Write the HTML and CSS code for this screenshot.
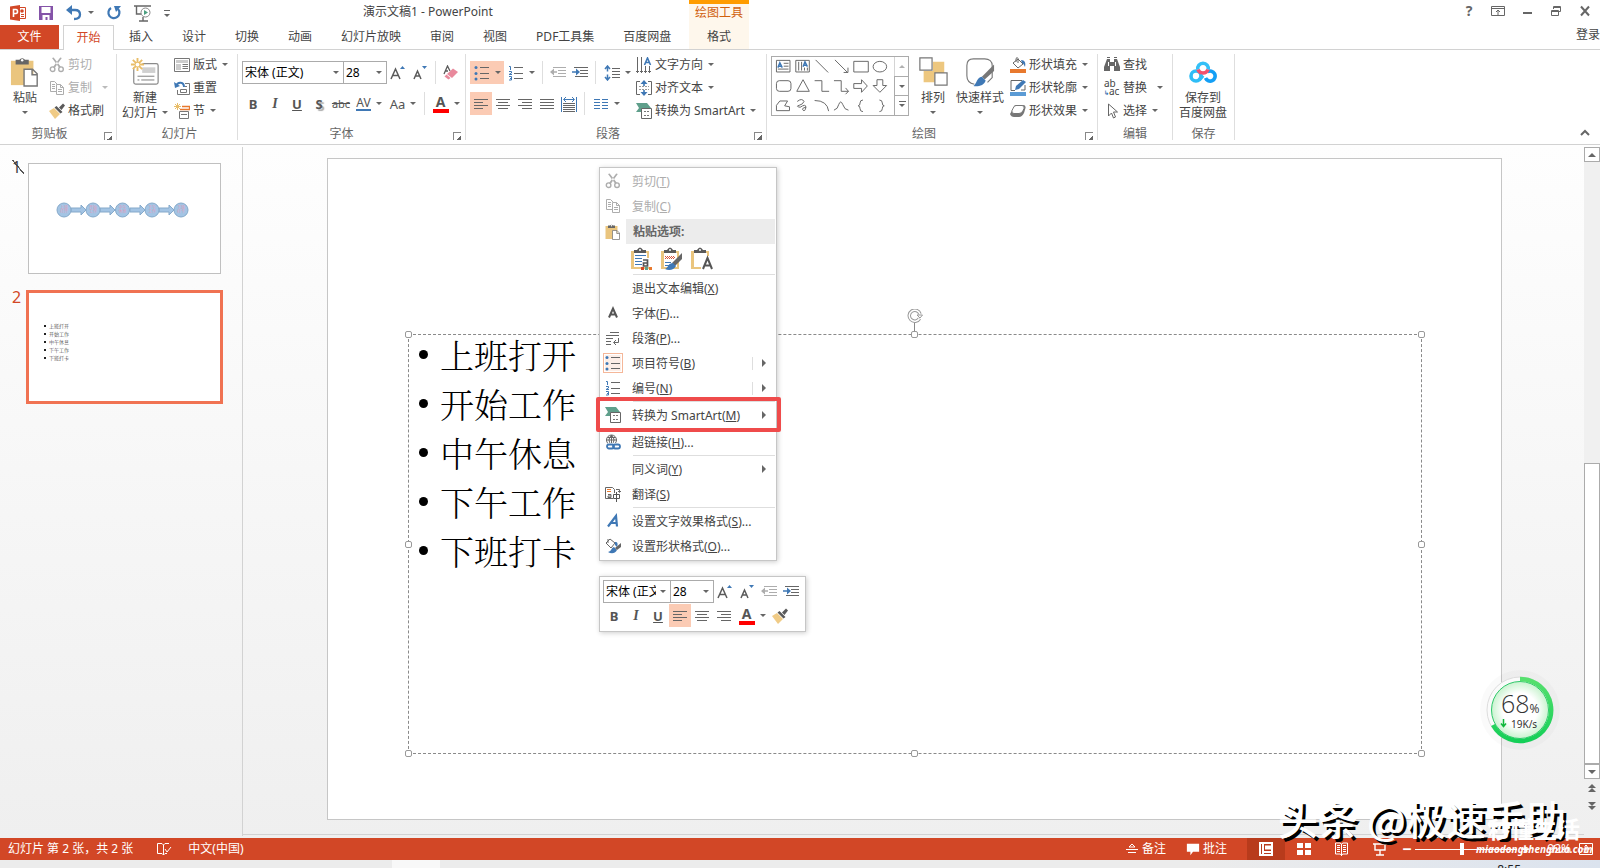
FILE: index.html
```html
<!DOCTYPE html>
<html lang="zh-CN">
<head>
<meta charset="utf-8">
<title>演示文稿1 - PowerPoint</title>
<link rel="stylesheet" href="styles.css">
</head>
<body>
<svg class="defs" aria-hidden="true">
  <symbol id="cut" viewBox="0 0 16 16"><g fill="none" stroke="currentColor" stroke-width="1.4"><circle cx="3.6" cy="12.2" r="2.3"/><circle cx="12" cy="12.2" r="2.3"/></g><path fill="currentColor" d="M3 1l1.600-.4L12 10l-2 .6zM12.800 1l-1.600-.4L4 10l2 .6z"/></symbol>
  <symbol id="copy" viewBox="0 0 16 16"><path fill="none" stroke="currentColor" d="M7 11.500H1.500v-10h4l2.500 2.500M3 4.500h3M3 6.500h3M3 8.500h3M7.500 4.500h4l3 3v7h-7zM11.500 4.500v3h3M9 9.500h4M9 11.500h4"/></symbol>
  <symbol id="brush" viewBox="0 0 16 16"><path fill="#f0cb86" d="M0 8l5-3 6 6-5 5z"/><path fill="#5a5a5a" d="M5.500 4.500l2-1.500 6 6-2 1.500zM10 4.500l4-4L16 2.500l-3.500 4.500z"/></symbol>
  <symbol id="paste" viewBox="0 0 32 32"><path fill="#eac57e" d="M1 4h24v26H1z"/><path fill="#666" d="M6 3h4a3.500 3.500 0 0 1 6 0h4v5H6z"/><circle cx="13" cy="3.500" r="1.300" fill="#fff"/><path fill="#fff" stroke="#777" stroke-width="1.500" d="M15 13h9l5 5v13H15zM23.500 13v6H29"/></symbol>
  <symbol id="newslide" viewBox="0 0 32 32"><rect x="4" y="7" width="26" height="22" rx="2" fill="#fff" stroke="#8a8a8a" stroke-width="1.300"/><path fill="#d0d0d0" d="M13 11h14v6H13z"/><path stroke="#777" d="M8 20.500h18M8 24.500h2M12 24.500h14"/><circle cx="8" cy="8" r="5.500" fill="#fff"/><path stroke="#e9bd68" stroke-width="2" d="M8 1v14M1 8h14M3 3l10 10M13 3L3 13"/><circle cx="8" cy="8" r="2" fill="#fff"/></symbol>
  <symbol id="layout" viewBox="0 0 16 16"><path fill="#fff" stroke="#777" d="M.5 1.500h15v13H.5z"/><path fill="#ccc" d="M2 3h12v3H2zM2 7h5v6H2z"/><path stroke="#777" d="M8.500 7.500H14M8.500 9.500H14M8.500 11.500H14"/></symbol>
  <symbol id="reset" viewBox="0 0 16 16"><path fill="none" stroke="#777" d="M11 3.500h4.500v11h-12V10"/><path fill="none" stroke="#777" d="M6.500 9.500h6v3h-6zM11 6.500h2"/><path fill="none" stroke="#3f78b5" stroke-width="2" d="M10 7c0-5-6-6-8-1"/><path fill="#3f78b5" d="M0 2l1 6 5-2z"/></symbol>
  <symbol id="section" viewBox="0 0 16 16"><path stroke="#e9bd68" d="M3.500 0v7M0 3.500h7M1 1l5 5M6 1L1 6"/><path fill="none" stroke="#e8792e" stroke-width="1.300" d="M8 3.500h7.500v3H6"/><path fill="none" stroke="#777" d="M5.500 8.500h9v7h-9zM7 11.500h6"/></symbol>
  <symbol id="growA" viewBox="0 0 16 16"><path fill="none" stroke="#5a5a5a" stroke-width="1.500" d="M1 14L5.500 4 10 14M3 10.500h5"/><path fill="#3f78b5" d="M10 4l2.500-3L15 4z"/></symbol>
  <symbol id="shrinkA" viewBox="0 0 16 16"><path fill="none" stroke="#5a5a5a" stroke-width="1.500" d="M2 14l3.500-8L9 14M3 11h5"/><path fill="#3f78b5" d="M10 1l2.500 3L15 1z"/></symbol>
  <symbol id="eraser" viewBox="0 0 16 16"><path fill="none" stroke="#5a5a5a" stroke-width="1.300" d="M1 9l3.500-8L7 6M2.500 6H5"/><path fill="#e9899c" d="M10 3.500l5 3.500-6 6-5-4z"/><path fill="#e9899c" d="M3.500 9.500l4 3.500-2 1.500-4-3z"/></symbol>
  <symbol id="bullets" viewBox="0 0 16 16"><g fill="#3f78b5"><circle cx="2" cy="2.500" r="1.500"/><circle cx="2" cy="8.500" r="1.500"/><circle cx="2" cy="14" r="1.500"/></g><path stroke="#666" d="M6 2.500h9M6 8.500h9M6 13.500h9"/></symbol>
  <symbol id="numbers" viewBox="0 0 16 16"><path fill="none" stroke="#3f78b5" d="M1 1.500h1.500V5M1 6.500h2.500V8L1 9.500h3M1 11.500h2.500v3.500H1M2 13.500h1"/><path stroke="#666" d="M6 2.500h9M6 8.500h9M6 13.500h9"/></symbol>
  <symbol id="outdent" viewBox="0 0 16 16"><path stroke="currentColor" d="M3 2.500h13M8 5.500h8M8 8.500h8M3 11.500h13"/><path fill="currentColor" d="M0 7l4-3.500v2.700h3v1.600H4v2.700z"/></symbol>
  <symbol id="indent" viewBox="0 0 16 16"><path stroke="#666" d="M2 2.500h14M8 5.500h8M8 8.500h8M3 11.500h13"/><path fill="#3f78b5" d="M8 7L4 3.500v2.700H0v1.600h4v2.700z"/></symbol>
  <symbol id="spacing" viewBox="0 0 16 16"><path stroke="#666" d="M8 3.500h8M8 6.500h8M8 9.500h8M8 12.500h8"/><path fill="none" stroke="#3f78b5" stroke-width="1.500" d="M3.500 1v5.500M3.500 9.500V15M1 4l2.500-3L6 4M1 12l2.500 3L6 12"/></symbol>
  <symbol id="left" viewBox="0 0 16 16"><path stroke="#666" d="M1 3.500h14M1 6.500h9M1 9.500h14M1 12.500h9"/></symbol>
  <symbol id="center" viewBox="0 0 16 16"><path stroke="#666" d="M1 3.500h14M3 6.500h10M1 9.500h14M3 12.500h10"/></symbol>
  <symbol id="right" viewBox="0 0 16 16"><path stroke="#666" d="M1 3.500h14M5 6.500h10M1 9.500h14M5 12.500h10"/></symbol>
  <symbol id="justify" viewBox="0 0 16 16"><path stroke="#666" d="M1 3.500h14M1 6.500h14M1 9.500h14M1 12.500h14"/></symbol>
  <symbol id="distribute" viewBox="0 0 16 16"><path fill="none" stroke="#3f78b5" d="M.5 1v15M15.500 1v15M3 3.500h10M5 1L2.500 3.500 5 6M11 1l2.500 2.500L11 6"/><path stroke="#666" d="M2 7.500h12M2 9.500h12M2 11.500h12M2 13.500h12M2 15.500h12"/></symbol>
  <symbol id="columns" viewBox="0 0 16 16"><path stroke="#3f78b5" d="M1 3.500h6M1 6.500h6M1 9.500h6M1 12.500h6M9 3.500h6M9 6.500h6M9 9.500h6M9 12.500h6"/></symbol>
  <symbol id="textdir" viewBox="0 0 16 16"><path fill="none" stroke="#666" d="M1.500 0v16M5.500 0v16M9.500 9v7M13.500 9v7M0 14l1.500 1.500L3 14M4 14l1.500 1.500L7 14M8 14l1.500 1.500L11 14M12 14l1.500 1.500L15 14"/><path fill="none" stroke="#3f78b5" stroke-width="1.600" d="M8.500 8l3-7 3 7M9.500 5.500h4"/></symbol>
  <symbol id="aligntext" viewBox="0 0 16 16"><path fill="none" stroke="#666" d="M4 1.500H.5v13H4M12 1.500h3.500v13H12"/><path stroke="#999" stroke-dasharray="2 1" d="M3 6.500h10M3 9.500h10"/><path fill="#3f78b5" d="M4.500 4L8 0l3.500 4H8.800v2H7.200V4zM4.500 12L8 16l3.500-4H8.800v-2H7.200v2z"/></symbol>
  <symbol id="smartart" viewBox="0 0 16 16"><path fill="#5f9f8b" d="M0 0h11l4 5H6v4H0l3-4z"/><path fill="#fff" stroke="#666" d="M5.500 5.500h10v10h-10z"/><path stroke="#777" stroke-dasharray="2 1" d="M8 8.500h6M8 12.500h6"/></symbol>
  <symbol id="arrange" viewBox="0 0 32 32"><path fill="#edc77f" d="M16 5h12v12H16zM6 15h12v12H6z"/><path fill="#fff" stroke="#777" stroke-width="1.300" d="M2 1h13v13H2zM18 17h13v13H18z"/></symbol>
  <symbol id="quickstyle" viewBox="0 0 32 32"><path fill="none" stroke="#777" stroke-width="1.200" d="M10 29C4 28 2 24 2 20V9c0-5 3-7 7-7h12c5 0 8 3 8 7v13l-5 5"/><path fill="#777" d="M31 8v7L21 24l-3-3z"/><path fill="#3f78b5" d="M9 31c4-3 3-9 9-10l4 4c-1 5-8 7-13 6z"/></symbol>
  <symbol id="fill" viewBox="0 0 16 16"><path fill="#e8792e" d="M0 12h16v4H0z"/><path fill="#fff" stroke="#666" d="M3 6l5-4 5 5-5 4zM6 5V1.500q1.500-2 2 0V6"/><path fill="#3f78b5" d="M11 3c4 0 5 3 4 7-1-2-1-3-3-4z"/></symbol>
  <symbol id="outline" viewBox="0 0 16 16"><path fill="#5b9bd5" d="M0 12h16v4H0z"/><path fill="none" stroke="#666" d="M12 .5H1v10h4M15 5v5h-4"/><path fill="#3f78b5" d="M5 10l1-4 7-6 3 2-7 7z"/></symbol>
  <symbol id="effects" viewBox="0 0 16 16"><path fill="#777" d="M5 2h8q3 0 2.500 3l-1.500 5q-2 4-5 4H4q-3 0-4-3z"/><path fill="#fff" stroke="#777" d="M6 2.500h6q3 0 2 3l-1 2q-1 3-4 3H4q-3 0-2-3l1-2q1-3 3-3z"/></symbol>
  <symbol id="find" viewBox="0 0 16 16"><path fill="#666" d="M3 2h3v3h4V2h3l3 8v4h-6v-5H6v5H0v-4zM3 0h3v1H3zM10 0h3v1h-3z"/><path stroke="#fff" d="M4.500 5v4M11.500 5v4"/></symbol>
  <symbol id="select" viewBox="0 0 16 16"><path fill="#fff" stroke="#666" d="M4.500 1v12l3-3 2 5 2-1-2-5h4z"/></symbol>
  <symbol id="cloud" viewBox="0 0 28 22"><g fill="none" stroke-width="3.600"><circle cx="7" cy="15" r="5" stroke="#2fbdf6"/><path stroke="#149ff5" d="M18.500 10.800A5 5 0 1 1 16.500 17"/><path stroke="#35c0f7" d="M8.800 8.500a5.300 5.300 0 1 1 10.400 0"/><path stroke="#f4516c" d="M9 8.500a5.300 5.300 0 0 0 10 0"/><path stroke="#2fbdf6" d="M10 19l4-4.500"/></g></symbol>
  <symbol id="link" viewBox="0 0 16 16"><g fill="none" stroke="#666"><circle cx="6.500" cy="6" r="5"/><path d="M1.500 6h10M6.500 1v10M2.500 3.500h8M6.500 1q-5 5 0 10M6.500 1q5 5 0 10"/></g><path fill="#fff" d="M3 9h13v7H3z"/><g fill="none" stroke="#3f78b5" stroke-width="1.800"><rect x="2" y="10.500" width="7" height="4" rx="2"/><rect x="8" y="10.500" width="7" height="4" rx="2"/></g></symbol>
  <symbol id="translate" viewBox="0 0 16 16"><path fill="#fff" stroke="#666" d="M.5 1.500h7l2 2v9h-9z"/><path stroke="#e8792e" d="M2 3.500h4M2 5.500h4"/><path fill="none" stroke="#666" d="M3 8.500h3v3H3v-1.500h3M11 3.500h3.500V6M13 5l1.500 1.500L16 5"/><path fill="#fff" d="M8 7h8v8H8z"/><path fill="none" stroke="#555" d="M8.500 8.500h6v4h-6zM11.500 6v10"/></symbol>
  <symbol id="bluea" viewBox="0 0 16 16"><path fill="none" stroke="#3f78b5" stroke-width="2.200" d="M3 13.500L11 3l1 10.500M6 10h6"/></symbol>
  <symbol id="boldA" viewBox="0 0 16 16"><path fill="none" stroke="#555" stroke-width="2" d="M4 12.500L8 3.500l4 9M5.500 9.500h5"/></symbol>
  <symbol id="para" viewBox="0 0 16 16"><path fill="none" stroke="#666" d="M5 2.500h9M1 5.500h13M1 8.500h7M1 11.500h5M1 14.500h5M13.500 8v4.500H9M11 10l-2.500 2.500L11 15"/></symbol>
  <symbol id="shapefmt" viewBox="0 0 16 16"><path fill="#fff" stroke="#666" d="M1 5l4-4 5 4-4 5zM3 1v4"/><path fill="#3f78b5" d="M10 4c3 0 3 2 2 5l-2-2zM3 14c4-1 3-4 6-5l3 3c-2 4-6 4-9 2z"/><path fill="#666" d="M16 5v4l-4 3-2-2z"/></symbol>
  <symbol id="clip" viewBox="0 0 22 24"><path fill="#eac57e" d="M0 4h18v18H0z"/><path fill="#fff" d="M3 6h13v14H3z"/><path fill="#5a5a5a" d="M3 3h3q3-5 6 0h3v3H3z"/><circle cx="9" cy="3" r="1" fill="#fff"/></symbol>
  <symbol id="bubble" viewBox="0 0 16 16"><path fill="currentColor" d="M1 2h14v9H8l-3 4v-4H1z"/></symbol>
</svg>

<header class="header">
  <div class="titlebar">
    <div class="qat">
      <svg class="i16" viewBox="0 0 16 16" role="img" aria-label="PowerPoint"><path fill="#d24726" d="M0 1.500L10 0v16L0 14.500z"/><path fill="none" stroke="#d24726" d="M10 2.500h5.500v11H10M11 9.500h3M11 11.500h3"/><circle cx="12" cy="6" r="1.800" fill="#d24726"/><path fill="none" stroke="#fff" stroke-width="1.600" d="M3.500 12V4.500H6q1.500 0 1.500 2T6 8.500H4"/></svg>
      <button aria-label="保存"><svg class="i16" viewBox="0 0 16 16"><path fill="#8453a8" d="M1 1h14v14H1z"/><path fill="#fff" d="M3.500 2h9v6h-9zM4.500 10h7v5h-2v-3h-2v3h-3z"/></svg></button>
      <button class="dd undo" aria-label="撤消"><svg class="i16" viewBox="0 0 16 16"><path fill="none" stroke="#3f78b5" stroke-width="2.300" d="M3 5h6q5 0 5 4.500T8 14"/><path fill="#3f78b5" d="M0 5l6-5v10z"/></svg></button>
      <button aria-label="重复"><svg class="i16" viewBox="0 0 16 16"><path fill="none" stroke="#3f78b5" stroke-width="2.200" d="M5 3a5.500 5.500 0 1 0 7 1"/><path fill="#3f78b5" d="M8 1h7l-5 6z"/></svg></button>
      <button class="wide" aria-label="从头开始"><svg class="i18" viewBox="0 0 18 18"><path fill="none" stroke="#666" stroke-width="1.400" d="M0 2h17M2.500 2v8H7M9 13v4M5 17h9"/><circle cx="11.500" cy="8.500" r="4.500" fill="#fff" stroke="#888"/><path fill="#4c9f80" d="M10 6l4 2.500-4 2.500z"/></svg></button>
      <button class="custom" aria-label="自定义快速访问工具栏"></button>
    </div>
    <h1 class="title">演示文稿1 - PowerPoint</h1>
    <div class="ctx">绘图工具</div>
    <div class="winbtns">
      <button class="help" aria-label="帮助">?</button>
      <button aria-label="功能区显示选项"><svg class="i14" viewBox="0 0 14 14"><path fill="none" stroke="#666" d="M.5 2.500h13v9H.5zM1 4.500h12M7 11V6M5 8l2-2 2 2"/></svg></button>
      <button aria-label="最小化"><svg class="i14" viewBox="0 0 14 14"><path fill="#666" d="M3 8h9v2H3z"/></svg></button>
      <button aria-label="向下还原"><svg class="i14" viewBox="0 0 14 14"><path fill="none" stroke="#666" d="M2.500 6.500h7v5h-7zM2 7.500h8M4.500 5V2.500h7v5H10M4 3.500h8"/></svg></button>
      <button aria-label="关闭"><svg class="i14" viewBox="0 0 14 14"><path stroke="#666" stroke-width="2" d="M3 2.500l8 9M11 2.500l-8 9"/></svg></button>
    </div>
  </div>
  <nav class="tabs">
    <button class="file">文件</button>
    <button class="active">开始</button>
    <button>插入</button><button>设计</button><button>切换</button><button>动画</button><button>幻灯片放映</button><button>审阅</button><button>视图</button><button>PDF工具集</button><button>百度网盘</button>
    <button class="fmt">格式</button>
    <a class="login" href="#">登录</a>
  </nav>
</header>

<section class="ribbon" aria-label="功能区">
  <div class="group g-clip">
    <div class="body">
      <button class="big"><svg class="i32"><use href="#paste"/></svg><span>粘贴</span><i class="caret"></i></button>
      <div class="stack">
        <button class="row off"><svg class="i16"><use href="#cut"/></svg>剪切</button>
        <button class="row off dd far"><svg class="i16"><use href="#copy"/></svg>复制</button>
        <button class="row"><svg class="i16"><use href="#brush"/></svg>格式刷</button>
      </div>
    </div>
    <div class="label launch">剪贴板</div>
  </div>
  <div class="group g-slides">
    <div class="body">
      <button class="big"><svg class="i32"><use href="#newslide"/></svg><span>新建</span><span class="dd">幻灯片</span></button>
      <div class="stack">
        <button class="row dd"><svg class="i16"><use href="#layout"/></svg>版式</button>
        <button class="row"><svg class="i16"><use href="#reset"/></svg>重置</button>
        <button class="row dd"><svg class="i16"><use href="#section"/></svg>节</button>
      </div>
    </div>
    <div class="label">幻灯片</div>
  </div>
  <div class="group g-font">
    <div class="body lines">
      <div class="line">
        <div class="combo name"><select aria-label="字体"><option>宋体 (正文)</option></select></div>
        <div class="combo size"><select aria-label="字号"><option>28</option></select></div>
        <button class="tool" aria-label="增大字号"><svg class="i16"><use href="#growA"/></svg></button>
        <button class="tool" aria-label="减小字号"><svg class="i16"><use href="#shrinkA"/></svg></button>
        <i class="sep"></i>
        <button class="tool" aria-label="清除格式"><svg class="i16"><use href="#eraser"/></svg></button>
      </div>
      <div class="line">
        <button class="tool b">B</button><button class="tool it">I</button><button class="tool u">U</button><button class="tool sh">S</button><button class="tool st">abc</button>
        <button class="tool dd w34 av"><span>AV</span></button><button class="tool dd w34 aa">Aa</button>
        <i class="sep"></i>
        <button class="tool dd w34 fc"><span>A</span></button>
      </div>
    </div>
    <div class="label launch">字体</div>
  </div>
  <div class="group g-para">
    <div class="body">
      <div class="lines">
        <div class="line">
          <button class="tool dd w34 on" aria-label="项目符号"><svg class="i16"><use href="#bullets"/></svg></button>
          <button class="tool dd w34" aria-label="编号"><svg class="i16"><use href="#numbers"/></svg></button>
          <i class="sep"></i>
          <button class="tool off" aria-label="降低列表级别"><svg class="i16"><use href="#outdent"/></svg></button>
          <button class="tool" aria-label="提高列表级别"><svg class="i16"><use href="#indent"/></svg></button>
          <i class="sep"></i>
          <button class="tool dd w34" aria-label="行距"><svg class="i16"><use href="#spacing"/></svg></button>
        </div>
        <div class="line">
          <button class="tool on" aria-label="左对齐"><svg class="i16"><use href="#left"/></svg></button>
          <button class="tool" aria-label="居中"><svg class="i16"><use href="#center"/></svg></button>
          <button class="tool" aria-label="右对齐"><svg class="i16"><use href="#right"/></svg></button>
          <button class="tool" aria-label="两端对齐"><svg class="i16"><use href="#justify"/></svg></button>
          <button class="tool" aria-label="分散对齐"><svg class="i16"><use href="#distribute"/></svg></button>
          <i class="sep"></i>
          <button class="tool dd w34" aria-label="分栏"><svg class="i16"><use href="#columns"/></svg></button>
        </div>
      </div>
      <div class="stack">
        <button class="row dd"><svg class="i16"><use href="#textdir"/></svg>文字方向</button>
        <button class="row dd"><svg class="i16"><use href="#aligntext"/></svg>对齐文本</button>
        <button class="row dd"><svg class="i16"><use href="#smartart"/></svg>转换为 SmartArt</button>
      </div>
    </div>
    <div class="label launch">段落</div>
  </div>
  <div class="group g-draw">
    <div class="body">
      <div class="gallery">
        <svg class="shapes" viewBox="1 0 122 60" role="img" aria-label="形状">
          <g fill="none" stroke="#666">
            <path d="M3.500 3.500h14v12h-14zM11 6.500h5M11 9.500h5M5 12.500h11M23.500 3.500h14v12h-14zM26.500 5v9M29.500 5v9M32.500 11v3M35.500 11v3"/>
            <path d="M44 3l13 13M64 3l13 13M77.500 11v5H73M83.500 4.500h15v11h-15z"/><ellipse cx="110.500" cy="10" rx="7" ry="5.500"/>
            <rect x="3.500" y="24.500" width="15" height="11" rx="3"/><path d="M31 23.500l6.500 12h-13zM43 24.500h7.500v11H58M63 24.500h7.500v11H78M75 32l3 3.500-3 3M83.500 27.500h8v-4l6 6.500-6 6.500v-4h-8zM107.500 23.500h6v6h4l-7 7-7-7h4z"/>
            <path d="M7 45.500h8l-3 5 5 1v4H3.500V50zM25 46q5-4 7 0-1 3-5 4t1 2q6-4 6 0-1 5-3 3-2-2 3-3M43 45q13 0 14.500 11M63 55q4-1 5-6 2-5 4 0 2 6 6 6M93 44.500q-3 0-3 3t-2 3q2 0 2 3t3 3M110 44.500q3 0 3 3t2 3q-2 0-2 3t-3 3"/>
          </g>
          <path fill="none" stroke="#3f78b5" stroke-width="1.500" d="M5 11l2-5 2.500 5M6 9.500h3M31 10l2-5 2.500 5M32 8.500h3"/>
        </svg>
        <div class="gscroll"><button class="dim" aria-label="上一行"><i class="caret up"></i></button><button aria-label="下一行"><i class="caret"></i></button><button aria-label="其他"><i class="caret bar"></i></button></div>
      </div>
      <button class="big arr"><svg class="i32"><use href="#arrange"/></svg><span>排列</span><i class="caret"></i></button>
      <button class="big qs"><svg class="i32"><use href="#quickstyle"/></svg><span>快速样式</span><i class="caret"></i></button>
      <div class="stack">
        <button class="row dd"><svg class="i16"><use href="#fill"/></svg>形状填充</button>
        <button class="row dd"><svg class="i16"><use href="#outline"/></svg>形状轮廓</button>
        <button class="row dd"><svg class="i16"><use href="#effects"/></svg>形状效果</button>
      </div>
    </div>
    <div class="label launch">绘图</div>
  </div>
  <div class="group g-edit">
    <div class="body">
      <div class="stack">
        <button class="row"><svg class="i16"><use href="#find"/></svg>查找</button>
        <button class="row dd far"><span class="abac">ab<br><b>↳</b>ac</span>替换</button>
        <button class="row dd"><svg class="i16"><use href="#select"/></svg>选择</button>
      </div>
    </div>
    <div class="label">编辑</div>
  </div>
  <div class="group g-save">
    <div class="body">
      <button class="big"><svg class="i32"><use href="#cloud" x="1" y="4" width="28" height="22"/></svg><span>保存到</span><span>百度网盘</span></button>
    </div>
    <div class="label">保存</div>
  </div>
  <button class="collapse" aria-label="折叠功能区"><svg class="i14" viewBox="0 0 14 14"><path fill="none" stroke="#666" stroke-width="2" d="M3 9l4-4 4 4"/></svg></button>
</section>

<main class="work">
  <aside class="thumbs">
    <div class="thumb"><span class="num hid">1</span>
      <div class="mini">
        <svg viewBox="0 0 191 109" role="img" aria-label="流程图"><g fill="#a3c4e4" stroke="#85a9ca"><path d="M42 44h10v-3l5 5-5 5v-3H42zM71 44h10v-3l5 5-5 5v-3H71zM101 44h10v-3l5 5-5 5v-3h-10zM130 44h10v-3l5 5-5 5v-3h-10z"/><circle cx="35" cy="46" r="7"/><circle cx="64" cy="46" r="7"/><circle cx="93.500" cy="46" r="7"/><circle cx="123" cy="46" r="7"/><circle cx="152" cy="46" r="7"/></g>
        <g class="nodes"><text x="35" y="45">上班</text><text x="35" y="49">打开</text><text x="64" y="45">开始</text><text x="64" y="49">工作</text><text x="93.500" y="45">中午</text><text x="93.500" y="49">休息</text><text x="123" y="45">下午</text><text x="123" y="49">工作</text><text x="152" y="45">下班</text><text x="152" y="49">打卡</text></g></svg>
      </div>
    </div>
    <div class="thumb cur"><span class="num">2</span>
      <div class="mini"><ul><li>上班打开</li><li>开始工作</li><li>中午休息</li><li>下午工作</li><li>下班打卡</li></ul></div>
    </div>
  </aside>
  <div class="stage">
    <div class="slide">
      <div class="textbox">
        <ul><li>上班打开</li><li>开始工作</li><li>中午休息</li><li>下午工作</li><li>下班打卡</li></ul>
        <i class="h tl"></i><i class="h tc"></i><i class="h tr"></i><i class="h ml"></i><i class="h mr"></i><i class="h bl"></i><i class="h bc"></i><i class="h br"></i>
        <svg class="rot" viewBox="0 0 16 22"><path fill="none" stroke="#999" stroke-width="3.500" d="M12.500 9.500A5.500 5.500 0 1 1 13 5"/><path fill="none" stroke="#fff" stroke-width="1.500" d="M12.500 9.500A5.500 5.500 0 1 1 13 5"/><path fill="#fff" stroke="#999" d="M10 6h5.500L13 9z"/><path stroke="#888" d="M7.500 14v8"/></svg>
      </div>
    </div>

    <div class="menu" role="menu">
      <button class="off"><svg class="i16"><use href="#cut"/></svg>剪切(<u>T</u>)</button>
      <button class="off"><svg class="i16"><use href="#copy"/></svg>复制(<u>C</u>)</button>
      <div class="head"><svg class="i16" viewBox="0 0 32 32"><use href="#paste"/></svg><span>粘贴选项:</span></div>
      <div class="pastes">
        <button aria-label="使用目标主题"><svg viewBox="0 0 22 24"><use href="#clip"/><path stroke="#3f78b5" d="M4 8.500h11M4 11.500h7M4 14.500h7M4 17.500h7"/><path fill="#fff" d="M11 11h11v9H11z"/><path fill="none" stroke="#555" stroke-width="1.700" d="M12 13h4.500v6H12.500v-3h4"/><path fill="#d24726" d="M10 20h3v3h-3z"/><path fill="#5f9f8b" d="M14 20h3v3h-3z"/><path fill="#e8792e" d="M18 20h3v3h-3z"/></svg></button>
        <button aria-label="保留源格式"><svg viewBox="0 0 22 24"><use href="#clip"/><path stroke="#d9543a" stroke-dasharray="1 1" d="M4 9.500h10M5 10.500h9M4 11.500h10"/><path stroke="#3f78b5" d="M4 15.500h6M4 18.500h4"/><path fill="#666" d="M21 6v6l-7 7-3-3z"/><path fill="#3f78b5" d="M4 22c4-2 3-6 8-6l3 3c-2 4-7 5-11 3z"/></svg></button>
        <button aria-label="只保留文本"><svg viewBox="0 0 22 24"><use href="#clip"/><path fill="#fff" d="M10 9h12v15H10z"/><path fill="none" stroke="#555" stroke-width="2" d="M12 22l4.500-11L21 22M13.500 18.500h6"/></svg></button>
      </div>
      <hr>
      <button>退出文本编辑(<u>X</u>)</button>
      <button><svg class="i16"><use href="#boldA"/></svg>字体(<u>F</u>)...</button>
      <button><svg class="i16"><use href="#para"/></svg>段落(<u>P</u>)...</button>
      <button class="sub split sel"><svg class="i16"><use href="#bullets"/></svg>项目符号(<u>B</u>)</button>
      <button class="sub split"><svg class="i16"><use href="#numbers"/></svg>编号(<u>N</u>)</button>
      <hr>
      <button class="sub"><svg class="i16"><use href="#smartart"/></svg>转换为 SmartArt(<u>M</u>)</button>
      <hr>
      <button><svg class="i16"><use href="#link"/></svg>超链接(<u>H</u>)...</button>
      <hr>
      <button class="sub">同义词(<u>Y</u>)</button>
      <button><svg class="i16"><use href="#translate"/></svg>翻译(<u>S</u>)</button>
      <hr>
      <button><svg class="i16"><use href="#bluea"/></svg>设置文字效果格式(<u>S</u>)...</button>
      <button><svg class="i16"><use href="#shapefmt"/></svg>设置形状格式(<u>O</u>)...</button>
      <div class="mark"></div>
    </div>

    <div class="minibar">
      <div class="line">
        <div class="combo mname"><select aria-label="字体"><option>宋体 (正文)</option></select></div>
        <div class="combo size"><select aria-label="字号"><option>28</option></select></div>
        <button class="tool" aria-label="增大字号"><svg class="i16"><use href="#growA"/></svg></button>
        <button class="tool" aria-label="减小字号"><svg class="i16"><use href="#shrinkA"/></svg></button>
        <button class="tool off" aria-label="降低列表级别"><svg class="i16"><use href="#outdent"/></svg></button>
        <button class="tool" aria-label="提高列表级别"><svg class="i16"><use href="#indent"/></svg></button>
      </div>
      <div class="line">
        <button class="tool b">B</button><button class="tool it">I</button><button class="tool u">U</button>
        <button class="tool on" aria-label="左对齐"><svg class="i16"><use href="#left"/></svg></button>
        <button class="tool" aria-label="居中"><svg class="i16"><use href="#center"/></svg></button>
        <button class="tool" aria-label="右对齐"><svg class="i16"><use href="#right"/></svg></button>
        <button class="tool dd w34 fc"><span>A</span></button>
        <button class="tool" aria-label="格式刷"><svg class="i16"><use href="#brush"/></svg></button>
      </div>
    </div>
  </div>
  <div class="scroll">
    <button class="box" aria-label="向上滚动"><i class="caret up"></i></button>
    <div class="track"><div class="grip"></div></div>
    <button class="box" aria-label="向下滚动"><i class="caret"></i></button>
    <button class="dbl" aria-label="上一张幻灯片"><i class="caret up"></i><i class="caret up"></i></button>
    <button class="dbl" aria-label="下一张幻灯片"><i class="caret"></i><i class="caret"></i></button>
  </div>
</main>

<footer class="status">
  <span class="count">幻灯片 第 2 张，共 2 张</span>
  <svg class="i16" viewBox="0 0 16 16"><path fill="none" stroke="#fff" d="M7.500 4v10M7.500 4L6 2.500H1.500v10H6L7.500 14M7.500 4L9 2.500h4M7.500 14L9 12.500h2M9 8l2 3 4-5"/></svg>
  <span class="lang">中文(中国)</span>
  <div class="tools">
    <button class="note"><svg class="i14" viewBox="0 0 14 14"><path fill="none" stroke="#fff" d="M1 7.500h12M3 10.500h8M4 5l3-3 3 3z"/></svg>备注</button>
    <button class="comment"><svg class="i14"><use href="#bubble"/></svg>批注</button>
    <button class="view now" aria-label="普通视图"><svg class="i16" viewBox="0 0 16 16"><path fill="none" stroke="#fff" stroke-width="2" d="M2 2h12v12H2zM5 2v12M5 11h9M8 5.500h4v2H8z"/></svg></button>
    <button class="view" aria-label="幻灯片浏览"><svg class="i16" viewBox="0 0 16 16"><path fill="#fff" d="M1 2h6v5H1zM9 2h6v5H9zM1 9h6v5H1zM9 9h6v5H9z"/></svg></button>
    <button class="view" aria-label="阅读视图"><svg class="i16" viewBox="0 0 16 16"><path fill="none" stroke="#fff" d="M7.500 3v12M7.500 3L6 2H1.500v11H6l1.500 1L9 13h4.500V2H9zM3 4.500h3M3 6.500h3M3 8.500h3M3 10.500h3M9 4.500h3M9 6.500h3M9 8.500h3M9 10.500h3"/></svg></button>
    <button class="view" aria-label="幻灯片放映"><svg class="i16" viewBox="0 0 16 16"><path fill="none" stroke="#fff" stroke-width="1.400" d="M1 3h14M3 3v6h10V3M8 9v5M4 14h8"/></svg></button>
    <button class="zm" aria-label="缩小">−</button>
    <input class="zoom" type="range" min="10" max="190" value="92" aria-label="显示比例">
    <button class="zm" aria-label="放大">+</button>
    <span class="pct">92%</span>
    <button class="fit" aria-label="适应窗口"><svg class="i14" viewBox="0 0 14 14"><path fill="none" stroke="#fff" d="M.5 1.500h13v11H.5zM7 3v8M3 7h8M5.500 4.500L7 3l1.500 1.500M5.500 9.500L7 11l1.500-1.500"/></svg></button>
  </div>
</footer>
<div class="taskbar"><i></i><time>8:55</time></div>

<div class="ball">
  <svg viewBox="0 0 84 84" aria-hidden="true"><defs><radialGradient id="rg"><stop offset=".6" stop-color="#fff"/><stop offset="1" stop-color="#c9f3cf"/></radialGradient><linearGradient id="lg" x2="0" y2="1"><stop stop-color="#56e06e"/><stop offset="1" stop-color="#14cf57"/></linearGradient></defs><circle cx="42" cy="42" r="40" fill="#000" opacity=".02"/><circle cx="42" cy="42" r="33" fill="#fafafa" stroke="#ddd"/><circle cx="42" cy="42" r="28.500" fill="url(#rg)" stroke="#2fc96b"/><path fill="none" stroke="url(#lg)" stroke-width="4.500" d="M42 11A31 31 0 1 1 15 57"/><path fill="none" stroke="#10b83c" stroke-width="1.500" d="M25.500 51v7M23 55.500l2.500 3 2.500-3"/></svg>
  <div class="pctbig">68<small>%</small></div>
  <div class="speed">19K/s</div>
</div>
<div class="wm"><span class="wm1">头条 @极速手助</span><span class="wm2">秒懂生活</span><span class="wm3">miaodongshenghuo.com</span></div>
</body>
</html>
```
FILE: styles.css
```css
* { box-sizing: border-box; }
body {
  margin: 0;
  min-height: 100vh;
  display: flex;
  flex-direction: column;
  overflow: hidden;
  background: #fff;
  color: #444;
  font: 12px/16px "Noto Sans", "Noto Sans CJK SC", sans-serif;
}
button, select {
  font: inherit;
  color: inherit;
  background: none;
  border: 0;
  padding: 0;
  margin: 0;
  white-space: nowrap;
}
svg { display: block; flex: none; }
i { font-style: normal; }
.defs { position: absolute; width: 0; height: 0; }
.i14 { width: 14px; height: 14px; }
.i16 { width: 16px; height: 16px; }
.i18 { width: 18px; height: 18px; }
.i32 { width: 30px; height: 30px; }

.caret, .dd::after {
  content: "";
  flex: none;
  width: 0;
  height: 0;
  border: 3px solid transparent;
  border-top-color: #666;
  border-bottom: 0;
}
.caret.up { border-top: 0; border-bottom: 3px solid #666; }

/* header */
.titlebar { display: flex; height: 25px; }
.qat { display: flex; align-items: center; width: 363px; padding-left: 10px; gap: 12px; }
.qat button { display: flex; align-items: center; }
.undo { gap: 6px; }
.custom::before {
  content: "";
  width: 6px;
  height: 5px;
  border-top: 1px solid #666;
}
.custom::after {
  content: "";
  margin: 5px 0 0 -6px;
  border: 3px solid transparent;
  border-top-color: #666;
  border-bottom: 0;
}
.title { width: 326px; margin: 0; font-size: 12px; line-height: 24px; font-weight: 400; }
.ctx {
  width: 60px;
  border-top: 4px solid #ff9c00;
  background: #fef7ec;
  color: #d0600c;
  line-height: 17px;
  text-align: center;
}
.winbtns { display: flex; align-items: center; gap: 15px; margin-left: auto; padding-right: 8px; }
.winbtns button { margin-top: -3px; }
.winbtns .help { width: 14px; font-size: 14px; font-weight: 700; color: #666; }
.tabs { display: flex; height: 25px; border-bottom: 1px solid #d2d2d2; }
.tabs button { padding: 0 14px; margin-right: 1px; }
.tabs .file { width: 59px; margin-right: 4px; background: #d24726; color: #fff; }
.tabs .active {
  width: 51px;
  margin-bottom: -1px;
  padding: 0;
  border: 1px solid #d2d2d2;
  border-bottom: 0;
  background: #fff;
  color: #d24726;
}
.tabs .fmt { width: 60px; margin-left: auto; margin-right: 0; background: #fef7ec; }
.tabs .login { width: 851px; padding-right: 0; text-align: right; color: #444; text-decoration: none; line-height: 20px; }

/* ribbon */
.ribbon { display: flex; height: 95px; padding: 4px 0 4px; border-bottom: 1px solid #d2d2d2; }
.group { display: flex; flex-direction: column; border-right: 1px solid #dedede; }
.body { display: flex; flex: 1; }
.label { position: relative; height: 16px; color: #666; text-align: center; margin-bottom: -2px; }
.launch { padding-right: 20px; }
.launch::after {
  content: "";
  position: absolute;
  right: 4px;
  bottom: 2px;
  width: 7px;
  height: 7px;
  border: 1px solid #888;
  border-width: 1px 0 0 1px;
  background: linear-gradient(135deg, transparent 50%, #666 50%) 100% 100% / 5px 5px no-repeat;
}
.big { display: flex; flex-direction: column; align-items: center; width: 36px; padding-top: 3px; line-height: 15px; }
.big svg { margin-bottom: 3px; }
.big .caret { margin-top: 6px; }
.big .dd { display: flex; align-items: center; gap: 4px; }
.stack { display: flex; flex-direction: column; align-items: flex-start; margin-top: -1px; }
.row { display: flex; align-items: center; gap: 3px; height: 23px; }
.row.dd::after { margin-left: 2px; }
.row.far::after { margin-left: 7px; }
.off { color: #adadad; }
.off.dd::after { border-top-color: #bbb; }
.lines { display: flex; flex-direction: column; gap: 8px; padding-top: 7px; }
.line { display: flex; height: 23px; }
.combo { position: relative; display: flex; flex: none; border: 1px solid #ababab; background: #fff; color: #000; }
.combo select { width: 100%; padding: 0 2px; appearance: none; overflow: hidden; outline: 0; }
.combo::after {
  content: "";
  position: absolute;
  right: 4px;
  top: 9px;
  border: 3px solid transparent;
  border-top-color: #666;
  border-bottom: 0;
}
.combo.name { width: 102px; }
.combo.mname { width: 68px; }
.combo.size { width: 44px; margin-left: -1px; }
.mname select { padding-right: 14px; }
.tool { display: flex; flex: none; align-items: center; justify-content: center; width: 22px; gap: 5px; color: #555; font-size: 13px; }
.tool.off { color: #adadad; }
.w34 { width: 34px; }
.on { background: #fbcbb4; }
.sep { width: 1px; margin: 0 4px; background: #dedede; }
.b { font-weight: 700; }
.it { font: italic 700 14px "Liberation Serif", serif; }
.u { font-weight: 700; text-decoration: underline; }
.sh { font-weight: 700; text-shadow: 2px 2px 1px #aaa; }
.st { font-size: 11px; text-decoration: line-through; }
.av span { border-bottom: 2px solid #3f78b5; line-height: 13px; font-size: 12px; }
.fc span { width: 16px; border-bottom: 4px solid #f00; line-height: 14px; font-size: 14px; font-weight: 700; }

.g-clip { width: 117px; padding-left: 7px; }
.g-clip .stack { padding-left: 6px; }
.g-slides { width: 121px; padding-left: 5px; }
.g-slides .big { width: 46px; margin-right: 6px; }
.g-font { width: 228px; padding-left: 4px; }
.g-font .label, .g-clip .label { padding-right: 24px; }
.g-para { width: 301px; padding-left: 4px; }
.g-para .stack { padding-left: 2px; }
.g-draw { width: 331px; padding-left: 4px; }
.g-edit { width: 75px; padding-left: 6px; }
.g-edit .label { padding-right: 6px; }
.g-save { width: 62px; }
.g-save .big { width: 60px; }
.gallery { display: flex; width: 138px; height: 60px; margin-top: 2px; border: 1px solid #ababab; }
.shapes { width: 122px; height: 58px; }
.gscroll { display: flex; flex-direction: column; flex: 1; }
.gscroll button { flex: 1; display: flex; align-items: center; justify-content: center; border-left: 1px solid #ababab; }
.gscroll button + button { border-top: 1px solid #ababab; }
.gscroll .dim { opacity: .5; }
.bar { position: relative; }
.bar::before { content: ""; position: absolute; left: -3px; top: -6px; width: 7px; height: 1px; background: #666; }
.arr { margin-left: 6px; }
.qs { width: 50px; margin-left: 4px; margin-right: 5px; }
.abac { width: 16px; font-size: 10px; line-height: 8px; text-align: left; }
.abac b { color: #3f78b5; font-size: 6px; }
.collapse { align-self: flex-end; margin-left: auto; padding: 0 8px 0 0; }

/* workspace */
.work { flex: 1; display: flex; background: linear-gradient(#fefefe, #efefef); }
.thumbs { width: 243px; margin-top: 2px; margin-bottom: 2px; border-right: 1px solid #d2d2d2; padding-top: 13px; display: flex; flex-direction: column; gap: 13px; }
.thumb { display: flex; padding: 3px 21px 0 12px; }
.num { width: 16px; font-size: 16px; line-height: 14px; }
.hid { margin-top: -3px; background: linear-gradient(50deg, transparent 47%, #555 48%, #555 54%, transparent 55%) 0 0 / 12px 14px no-repeat; }
.mini { flex: 1; aspect-ratio: 193 / 110; border: 1px solid #c0c0c0; background: #fff; }
.mini svg { width: 100%; }
.nodes { font-size: 4px; fill: #e29ab8; text-anchor: middle; }
.cur { padding: 3px 19px 0 12px; }
.cur .num { width: 14px; color: #d24726; }
.cur .mini { border: 3px solid #f07252; aspect-ratio: 197 / 114; }
.mini ul { margin: 29px 0 0 15px; padding: 0; list-style: none; font: 5px/8px "Noto Serif CJK SC", "Noto Sans CJK SC", serif; }
.mini li { display: flex; align-items: center; gap: 3px; }
.mini li::before { content: ""; width: 2px; height: 2px; background: #222; }
.stage { position: relative; flex: 1; display: flex; margin-bottom: 3px; padding: 13px 82px 14px 84px; border-bottom: 1px solid #d2d2d2; }
.slide { position: relative; flex: 1; border: 1px solid #c6c6c6; background: #fff; }
.textbox { position: absolute; inset: 175px 79px 65px 80px; border: 1px dashed #8a8a8a; }
.textbox ul { margin: -5px 0 0; padding: 0 0 0 10px; list-style: none; color: #000; font: 300 34px/49px "Noto Serif CJK SC", "Noto Sans CJK SC", serif; }
.textbox li { display: flex; align-items: center; gap: 12px; }
.textbox li::before { content: ""; width: 9px; height: 9px; border-radius: 50%; background: #000; }
.h { position: absolute; width: 7px; height: 7px; border: 1px solid #999; border-radius: 2px; background: #fff; }
.tl, .tc, .tr { top: -4px; }
.ml, .mr { top: calc(50% - 3px); }
.bl, .bc, .br { bottom: -4px; }
.tl, .ml, .bl { left: -4px; }
.tc, .bc { left: calc(50% - 4px); }
.tr, .mr, .br { right: -4px; }
.rot { position: absolute; left: calc(50% - 8px); top: -26px; width: 16px; height: 22px; }

.menu {
  position: absolute;
  left: 356px;
  top: 22px;
  width: 178px;
  padding: 1px;
  border: 1px solid #c6c6c6;
  background: #fff;
  box-shadow: 1px 1px 5px rgba(0, 0, 0, .2);
}
.menu > button { position: relative; display: block; width: 100%; height: 25px; padding-left: 31px; text-align: left; }
.menu > button svg { position: absolute; left: 4px; top: 4px; }
.menu hr { height: 1px; margin: 0 0 1px 32px; border: 0; background: #dedede; }
.head { display: flex; align-items: center; height: 25px; padding-left: 4px; font-weight: 700; color: #666; }
.head span { flex: 1; margin-left: 5px; padding-left: 7px; line-height: 25px; background: #ececec; }
.pastes { display: flex; gap: 8px; height: 30px; padding: 0 0 0 30px; }
.pastes svg { width: 22px; height: 24px; }
.sub::after {
  content: "";
  position: absolute;
  right: 9px;
  top: 8px;
  border: 4px solid transparent;
  border-left-color: #666;
  border-right: 0;
}
.split::before { content: ""; position: absolute; right: 22px; top: 6px; width: 1px; height: 13px; background: #dedede; }
.sel svg { outline: 1px solid #f5b799; outline-offset: 1px; background: #fdeee7; }
.mark { position: absolute; left: -4px; right: -5px; top: 229px; height: 35px; border: 4px solid #ef4b4b; border-radius: 2px; }

.minibar {
  position: absolute;
  left: 356px;
  top: 431px;
  padding: 3px;
  width: 207px;
  height: 56px;
  border: 1px solid #c6c6c6;
  background: #fff;
  box-shadow: 1px 1px 5px rgba(0, 0, 0, .2);
}
.minibar .line + .line { margin-top: 1px; }

.scroll { display: flex; flex-direction: column; width: 16px; margin-top: 2px; }
.scroll button { display: flex; align-items: center; justify-content: center; }
.box { height: 15px; border: 1px solid #ababab; background: #fff; }
.track { flex: 1; display: flex; flex-direction: column; justify-content: flex-end; background: #f0f0f0; }
.grip { height: 50%; border: 1px solid #ababab; background: #fff; }
.box .caret { border-width: 4px; border-bottom-width: 0; }
.box .caret.up { border-width: 0 4px 4px; }
.scroll .dbl { flex-direction: column; height: 18px; }
.scroll .dbl + .dbl { margin-bottom: 23px; }
.dbl .caret { border-width: 4px; }
.dbl .caret.up { border-top: 0; }
.dbl .caret:not(.up) { border-bottom: 0; }

/* status */
.status { display: flex; align-items: center; height: 22px; padding-left: 8px; background: #d24726; color: #fff; line-height: 20px; }
.count { margin-right: 23px; }
.lang { margin-left: 16px; }
.tools { display: flex; align-items: center; align-self: stretch; margin-left: auto; padding-right: 7px; }
.note, .comment { display: flex; align-items: center; gap: 3px; margin-right: 20px; }
.view { display: flex; align-items: center; justify-content: center; width: 38px; align-self: stretch; }
.now { background: #b83b1c; }
.zm { width: 16px; font-size: 16px; font-weight: 700; }
.zoom { width: 102px; height: 13px; margin: 0; appearance: none; background: linear-gradient(#fff, #fff) 50% / 100% 1px no-repeat; }
.zoom::-webkit-slider-thumb { appearance: none; width: 4px; height: 12px; background: #fff; }
.pct { width: 38px; text-align: right; margin-right: 8px; }
.taskbar { display: flex; justify-content: space-between; height: 8px; overflow: hidden; background: linear-gradient(90deg, #ececec 75%, #dbe3ee); color: #222; }
.taskbar i { width: 48px; margin-left: 392px; background: #f8f8f8; }
.taskbar time { margin-right: 79px; line-height: 18px; padding-top: 1px; }

/* overlays */
.ball { position: absolute; right: 38px; top: 668px; width: 84px; height: 84px; color: #333; }
.ball > * { position: absolute; }
.pctbig { left: 23px; top: 21px; font: 300 25px/28px "Open Sans", "Noto Sans", sans-serif; }
.pctbig small { font-size: 12px; font-weight: 400; }
.speed { left: 33px; top: 48px; font-size: 10px; line-height: 16px; }
.wm { position: absolute; right: 0; bottom: 0; width: 330px; height: 78px; color: #fff; white-space: nowrap; }
.wm span { position: absolute; }
.wm1 { left: 8px; top: 4px; font: 500 40px/48px "Noto Sans CJK SC", sans-serif; text-shadow: 3px 3px 0 #000; }
.wm2 { left: 218px; top: 26px; font-size: 23px; line-height: 26px; font-weight: 700; }
.wm3 { left: 206px; top: 52px; font-size: 10px; line-height: 14px; font-weight: 700; font-style: italic; }
```
